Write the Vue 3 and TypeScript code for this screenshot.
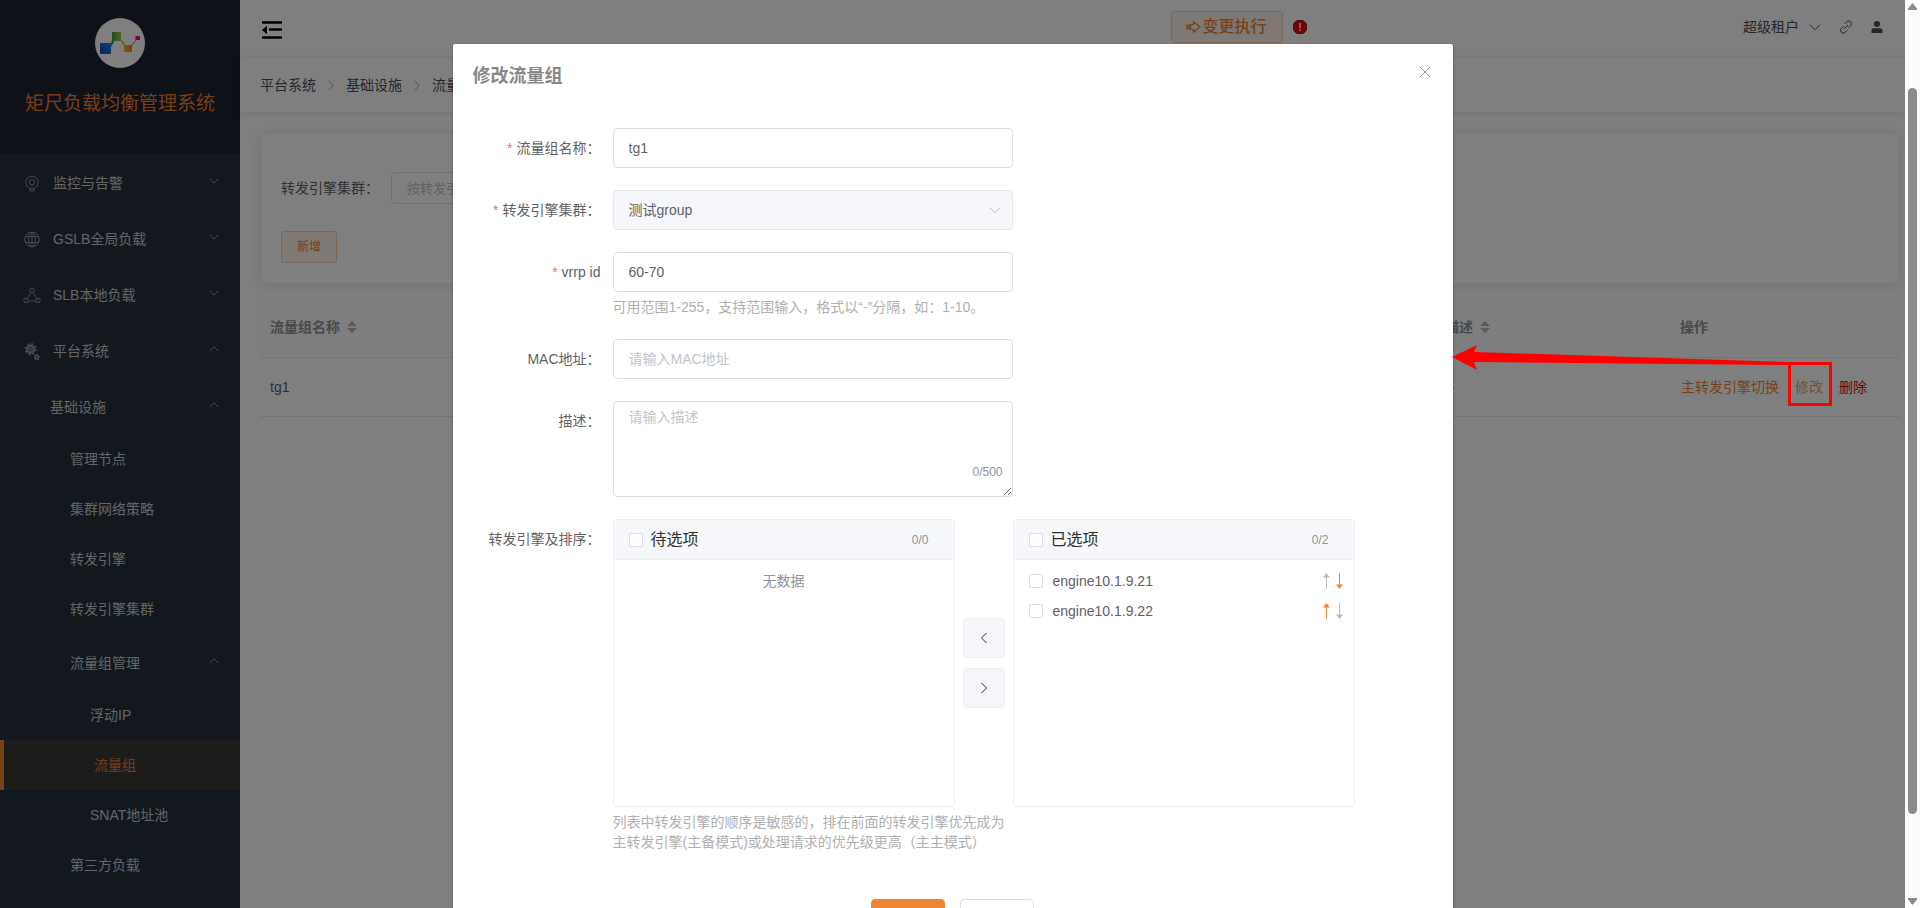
<script setup lang="ts">
import { ref } from 'vue'

interface MenuItem {
  label: string
  level: number
  icon?: string
  arrow?: 'up' | 'down'
  active?: boolean
}

const menu: MenuItem[] = [
  { label: '监控与告警', level: 0, icon: 'camera', arrow: 'down' },
  { label: 'GSLB全局负载', level: 0, icon: 'globe', arrow: 'down' },
  { label: 'SLB本地负载', level: 0, icon: 'nodes', arrow: 'down' },
  { label: '平台系统', level: 0, icon: 'gears', arrow: 'up' },
  { label: '基础设施', level: 1, arrow: 'up' },
  { label: '管理节点', level: 2 },
  { label: '集群网络策略', level: 2 },
  { label: '转发引擎', level: 2 },
  { label: '转发引擎集群', level: 2 },
  { label: '流量组管理', level: 2, arrow: 'up' },
  { label: '浮动IP', level: 3 },
  { label: '流量组', level: 3, active: true },
  { label: 'SNAT地址池', level: 3 },
  { label: '第三方负载', level: 2 },
]

const crumbs = ['平台系统', '基础设施', '流量组']
const engines = ['engine10.1.9.21', 'engine10.1.9.22']

const name = ref('tg1')
const vrrp = ref('60-70')
const mac = ref('')
const desc = ref('')
const cluster = ref('测试group')
</script>

<template>
  <div class="window">
    <div class="viewport">
      <div class="app">
        <aside class="sidebar">
          <div class="brand">
            <svg class="logo" viewBox="0 0 50 50" aria-hidden="true">
              <defs>
                <linearGradient id="lg-blue" x1="0" y1="1" x2="1" y2="0">
                  <stop offset="0" stop-color="#0a3fc0" /><stop offset="1" stop-color="#0e8fe0" />
                </linearGradient>
                <linearGradient id="lg-green" x1="0" y1="0" x2="1" y2="0">
                  <stop offset="0" stop-color="#2c9a3c" /><stop offset="1" stop-color="#b4c83c" />
                </linearGradient>
                <linearGradient id="lg-orange" x1="0" y1="0" x2="1" y2="0">
                  <stop offset="0" stop-color="#f0c020" /><stop offset="1" stop-color="#f07a18" />
                </linearGradient>
              </defs>
              <circle cx="25" cy="25" r="25" fill="#fff" />
              <path d="M14 27 L19 21 L19 24 L16 29 Z" fill="#1496b4" />
              <path d="M26 22 L31 29" stroke="#c8c83c" stroke-width="2" />
              <path d="M36 28 L42 21" stroke="#e8442c" stroke-width="1" />
              <rect x="5" y="25" width="11" height="11" rx="1" fill="url(#lg-blue)" />
              <rect x="17" y="14" width="9" height="9" rx="1" fill="url(#lg-green)" />
              <rect x="29" y="27" width="8" height="7" rx="1" fill="url(#lg-orange)" />
              <rect x="40.500" y="18" width="4.500" height="4" fill="#d8107c" />
            </svg>
            <h1>矩尺负载均衡管理系统</h1>
          </div>
          <nav>
            <a
              v-for="item in menu"
              :key="item.label"
              href="#"
              :class="['item', 'level-' + item.level, { sub: item.arrow, active: item.active }]"
            >
              <svg v-if="item.icon === 'camera'" class="icon" viewBox="0 0 16 16">
                <circle cx="8" cy="7" r="6.300" /><circle cx="8" cy="7" r="2.700" />
                <path d="M6.500 13l-1 2.400h5L9.500 13" />
              </svg>
              <svg v-else-if="item.icon === 'globe'" class="icon" viewBox="0 0 16 16">
                <circle cx="8" cy="8" r="7.300" /><ellipse cx="8" cy="8" rx="3.400" ry="7.300" />
                <path d="M8 .7v14.600M1.500 5h13M1.500 11h13" />
              </svg>
              <svg v-else-if="item.icon === 'nodes'" class="icon wide" viewBox="0 0 18 16">
                <circle cx="9" cy="2.700" r="2.200" /><circle cx="3" cy="13" r="2.200" /><circle cx="15" cy="13" r="2.200" />
                <path d="M8 4.800L4.200 11M10 4.800L13.800 11M5.300 13.500h7.400" />
              </svg>
              <svg v-else-if="item.icon === 'gears'" class="icon" viewBox="0 0 16 18">
                <circle cx="6.500" cy="6.500" r="3.500" stroke-width="2.600" />
                <circle cx="6.500" cy="6.500" r="5.500" stroke-width="2" stroke-dasharray="2.160 2.160" />
                <circle cx="6.500" cy="6.500" r="1" fill="currentColor" />
                <circle cx="13" cy="15" r="1.900" stroke-width="1.600" />
                <circle cx="13" cy="15" r="2.700" stroke-dasharray="1.060 1.060" />
              </svg>
              <span>{{ item.label }}</span>
              <svg v-if="item.arrow" :class="['caret', item.arrow]" viewBox="0 0 10 6"><path d="M.5 .7L5 5.200L9.500 .7" /></svg>
            </a>
          </nav>
        </aside>

        <main>
          <header class="topbar">
            <button class="collapse" aria-label="收起菜单">
              <svg viewBox="0 0 20 18"><path d="M0 1.500h20M7 8.500h13M0 16.500h20" stroke="#000" stroke-width="2.600" /><path d="M0 9l5-4.300v8.600z" /></svg>
            </button>
            <div class="change">
              <button class="apply">
                <svg viewBox="0 0 15 14"><path d="M1 4.500v5M3 4.500v5" stroke-width="1.500" /><path d="M4.500 4.500h3V1.800L14 7l-6.500 5.200V9.500h-3z" stroke-width="1.200" /></svg>
                变更执行
              </button>
              <svg class="alert" viewBox="0 0 14 14"><circle cx="7" cy="7" r="7" fill="#f00" /><path d="M7 3v5M7 9.500v1.500" stroke="#fff" stroke-width="1.600" /></svg>
            </div>
            <div class="user">
              <span>超级租户</span>
              <svg class="tenant-caret" viewBox="0 0 12 7"><path d="M1 .7L6 5.700L11 .7" /></svg>
              <svg class="link" viewBox="0 0 14 14"><path d="M5.600 3.900L7.800 1.700a2.600 2.600 0 0 1 4 .3a2.700 2.700 0 0 1 0 3.500L9.500 7.900M8.400 10.100L6.200 12.300a2.600 2.600 0 0 1-4-.3a2.700 2.700 0 0 1 0-3.500L4.500 6.100M5 9l4-4" /></svg>
              <svg class="person" viewBox="0 0 12 12"><circle cx="6" cy="3" r="3" /><path d="M.5 12V9.500q0-2.200 2.200-2.200h6.600q2.200 0 2.200 2.200V12z" /></svg>
            </div>
          </header>
          <nav class="crumbs">
            <template v-for="(crumb, i) in crumbs" :key="crumb">
              <svg v-if="i" viewBox="0 0 6 11"><path d="M.7 .7L5.200 5.500L.7 10.300" /></svg>
              <a href="#">{{ crumb }}</a>
            </template>
          </nav>

          <section class="search">
            <div class="field">
              <label for="search-cluster">转发引擎集群：</label>
              <input id="search-cluster" type="text" placeholder="按转发引擎集群查询" />
            </div>
            <button class="add">新增</button>
          </section>

          <table>
            <thead>
              <tr>
                <th>流量组名称 <svg class="sort" viewBox="0 0 10 12"><path d="M0 5L5 0L10 5zM0 7L5 12L10 7z" /></svg></th>
                <th colspan="4"></th>
                <th>描述 <svg class="sort" viewBox="0 0 10 12"><path d="M0 5L5 0L10 5zM0 7L5 12L10 7z" /></svg></th>
                <th class="ops-head">操作</th>
              </tr>
            </thead>
            <tbody>
              <tr>
                <td>tg1</td>
                <td colspan="4"></td>
                <td>--</td>
                <td>
                  <div class="ops">
                    <a href="#">主转发引擎切换</a>
                    <a href="#" class="edit">修改</a>
                    <a href="#" class="remove">删除</a>
                  </div>
                </td>
              </tr>
            </tbody>
          </table>
        </main>
      </div>

      <div class="overlay">
        <form class="dialog" role="dialog" aria-labelledby="dialog-title" @submit.prevent>
          <header>
            <h2 id="dialog-title">修改流量组</h2>
            <button type="button" class="close" aria-label="关闭">
              <svg viewBox="0 0 12 12"><path d="M1 1l10 10M11 1L1 11" /></svg>
            </button>
          </header>

          <div class="row">
            <label class="required" for="f-name">流量组名称：</label>
            <input id="f-name" v-model="name" class="control" type="text" />
          </div>
          <div class="row">
            <label class="required" for="f-cluster">转发引擎集群：</label>
            <div class="select">
              <select id="f-cluster" v-model="cluster" class="control" disabled>
                <option>测试group</option>
              </select>
              <svg viewBox="0 0 12 7"><path d="M1 .7L6 5.700L11 .7" /></svg>
            </div>
          </div>
          <div class="row">
            <label class="required" for="f-vrrp">vrrp id</label>
            <div class="body">
              <input id="f-vrrp" v-model="vrrp" class="control" type="text" />
              <p class="hint">可用范围1-255，支持范围输入，格式以“-”分隔，如：1-10。</p>
            </div>
          </div>
          <div class="row">
            <label for="f-mac">MAC地址：</label>
            <input id="f-mac" v-model="mac" class="control" type="text" placeholder="请输入MAC地址" />
          </div>
          <div class="row">
            <label for="f-desc">描述：</label>
            <div class="area">
              <textarea id="f-desc" v-model="desc" class="control" maxlength="500" placeholder="请输入描述"></textarea>
              <span class="count">{{ desc.length }}/500</span>
            </div>
          </div>
          <div class="row">
            <span class="label">转发引擎及排序：</span>
            <div class="body">
              <div class="transfer">
                <section class="panel">
                  <div class="panel-head">
                    <label><input type="checkbox" /> 待选项</label>
                    <span>0/0</span>
                  </div>
                  <p class="empty">无数据</p>
                </section>
                <div class="moves">
                  <button type="button" aria-label="移到左侧"><svg viewBox="0 0 8 12"><path d="M6.500 1L1.500 6l5 5" /></svg></button>
                  <button type="button" aria-label="移到右侧"><svg viewBox="0 0 8 12"><path d="M1.500 1l5 5l-5 5" /></svg></button>
                </div>
                <section class="panel">
                  <div class="panel-head">
                    <label><input type="checkbox" /> 已选项</label>
                    <span>0/2</span>
                  </div>
                  <ul>
                    <li v-for="(engine, i) in engines" :key="engine">
                      <label><input type="checkbox" /> {{ engine }}</label>
                      <button type="button" class="order" :disabled="i === 0" aria-label="上移">
                        <svg viewBox="0 0 7 16"><path d="M3.500 2v14" /><path class="head" d="M0 4.500L3.500 0L7 4.500z" /></svg>
                      </button>
                      <button type="button" class="order" :disabled="i === engines.length - 1" aria-label="下移">
                        <svg viewBox="0 0 7 16"><path d="M3.500 0v14" /><path class="head" d="M0 11.500L3.500 16L7 11.500z" /></svg>
                      </button>
                    </li>
                  </ul>
                </section>
              </div>
              <p class="hint">列表中转发引擎的顺序是敏感的，排在前面的转发引擎优先成为主转发引擎(主备模式)或处理请求的优先级更高（主主模式）</p>
            </div>
          </div>
          <footer>
            <button type="submit" class="primary">确定</button>
            <button type="button" class="plain">取消</button>
          </footer>
        </form>
      </div>

      <svg class="annotation" viewBox="0 0 380 62" aria-hidden="true">
        <path d="M0 12L25 0L22 7L336 17V20L22 17L25 25Z" fill="#f00" />
        <rect x="337.500" y="18.500" width="41" height="41" fill="none" stroke="#f00" stroke-width="3" />
      </svg>
    </div>

    <div class="scrollbar" aria-hidden="true">
      <svg viewBox="0 0 9 7"><path d="M4.500 0L9 5.500V7H0V5.500Z" /></svg>
      <div class="track"><div class="thumb"></div></div>
      <svg viewBox="0 0 9 7"><path d="M4.500 7L9 1.500V0H0V1.500Z" /></svg>
    </div>
  </div>
</template>

<style>
body {
  overflow: hidden;
}
</style>

<style scoped>
* {
  box-sizing: border-box;
}

.window {
  display: grid;
  grid-template-columns: minmax(0, 1fr) 15px;
  height: 100vh;
  font: 14px/20px "Liberation Sans", "Noto Sans CJK SC", sans-serif;
  color: #606266;
}

button,
input,
select,
textarea {
  font: inherit;
  color: inherit;
}

button {
  padding: 0;
  border: 0;
  background: none;
}

a {
  color: inherit;
  text-decoration: none;
}

h1,
h2,
p,
ul {
  margin: 0;
  padding: 0;
}

svg {
  flex: none;
  fill: none;
  stroke: currentColor;
}

.viewport {
  position: relative;
  overflow: hidden;
}

.app {
  display: grid;
  grid-template-columns: 240px minmax(0, 1fr);
  min-height: 100%;
}

.sidebar {
  background: #26303c;
  color: #c8cacc;
}

.brand {
  display: flex;
  flex-direction: column;
  align-items: center;
  gap: 21px;
  height: 154px;
  padding-top: 18px;
  background: #1c222e;
}

.logo {
  width: 50px;
  height: 50px;
  stroke: none;
}

h1 {
  font-size: 19px;
  font-weight: 400;
  line-height: 30px;
  color: #ee7e33;
  white-space: nowrap;
}

.item {
  display: flex;
  align-items: center;
  height: 50px;
  padding-right: 20px;
}

.item.sub {
  height: 56px;
  padding-top: 2px;
}

.level-0 {
  padding-left: 24px;
}

.level-1 {
  padding-left: 50px;
}

.level-2 {
  padding-left: 70px;
}

.level-3 {
  padding-left: 90px;
}

.item.active {
  border-left: 4px solid #ef8432;
  background: #383835;
  color: #ef7632;
}

.icon {
  width: 16px;
  height: 17px;
  margin-right: 13px;
  color: #909499;
}

.icon.wide {
  width: 18px;
  margin: 0 12px 0 -1px;
}

.caret {
  width: 10px;
  height: 6px;
  margin: 0 1px 4px auto;
  color: #909499;
}

.caret.up {
  transform: rotate(180deg);
}

.topbar {
  display: flex;
  align-items: center;
  justify-content: space-between;
  height: 58px;
  padding: 0 22px 3px;
  border-bottom: 1px solid #f0f1f3;
  color: #333;
}

main {
  background: #fff;
}

.collapse {
  width: 20px;
  height: 18px;
  margin-top: 5px;
  line-height: 0;
}

.collapse svg {
  width: 20px;
  height: 18px;
  fill: #000;
  stroke: none;
}

.change {
  display: flex;
  align-items: center;
  gap: 10px;
  margin-left: 452px;
}

.apply {
  display: flex;
  align-items: center;
  justify-content: center;
  gap: 1px;
  width: 112px;
  height: 32px;
  border: 1px solid #f9cead;
  border-radius: 3px;
  background: #fdf3eb;
  color: #ef8432;
  font-size: 16px;
  font-weight: 500;
}

.apply svg {
  width: 15px;
  height: 14px;
}

.alert {
  width: 14px;
  height: 14px;
}

.user {
  display: flex;
  align-items: center;
  color: #4a4d52;
}

.tenant-caret {
  width: 12px;
  height: 7px;
  margin: 0 18px 0 10px;
}

.link {
  width: 14px;
  height: 14px;
  margin-right: 18px;
}

.person {
  width: 12px;
  height: 12px;
  fill: currentColor;
  stroke: none;
}

.crumbs {
  display: flex;
  align-items: center;
  gap: 12px;
  height: 54px;
  padding: 0 20px;
  color: #4c4f55;
  box-shadow: 0 2px 8px rgba(0, 0, 0, 0.1);
}

.crumbs svg {
  width: 6px;
  height: 11px;
  color: #a8abb2;
}

.search {
  display: flex;
  flex-direction: column;
  align-items: flex-start;
  gap: 27px;
  margin: 20px 5px 15px 20px;
  padding: 39px 20px 20px;
  border: 1px solid #ebeef5;
  border-radius: 4px;
  box-shadow: 0 2px 12px rgba(0, 0, 0, 0.1);
}

.field {
  display: flex;
  align-items: center;
  gap: 12px;
}

.field input {
  width: 200px;
  height: 32px;
  padding: 0 15px;
  border: 1px solid #dcdfe6;
  border-radius: 4px;
  font-size: 13px;
}

::placeholder {
  color: #c0c4cc;
  opacity: 1;
}

.add {
  width: 56px;
  height: 32px;
  border: 1px solid #f9cead;
  border-radius: 3px;
  background: #fdf3eb;
  color: #ef8432;
  font-size: 12px;
}

table {
  width: calc(100% - 25px);
  margin-left: 20px;
  border-collapse: collapse;
  table-layout: fixed;
}

th,
td {
  padding: 0 10px;
  border-bottom: 1px solid #e6e9f0;
  text-align: left;
}

th {
  height: 58px;
  padding-bottom: 2px;
  background: #fcfcfc;
  color: #909399;
}

th:last-child {
  width: 230px;
}

td {
  height: 59px;
}

.sort {
  width: 10px;
  height: 12px;
  margin-left: 3px;
  vertical-align: -1px;
  fill: #b4b7bd;
  stroke: none;
}

.ops {
  display: flex;
  gap: 16px;
  padding-left: 1px;
  white-space: nowrap;
  color: #ef8432;
}

.edit {
  color: #e2a573;
}

.remove {
  color: #e60012;
}

.overlay {
  position: absolute;
  inset: 0;
  display: flex;
  justify-content: center;
  align-items: flex-start;
  padding-top: 44px;
  background: rgba(0, 0, 0, 0.5);
  overflow: hidden;
}

.dialog {
  display: flex;
  flex-direction: column;
  gap: 22px;
  width: 1000px;
  max-width: 100%;
  padding: 20px 20px 30px;
  border-radius: 2px;
  background: #fff;
  box-shadow: 0 1px 3px rgba(0, 0, 0, 0.3);
}

.dialog > header {
  display: flex;
  justify-content: space-between;
  height: 42px;
}

h2 {
  font-size: 18px;
  line-height: 24px;
  color: #888;
}

.close {
  width: 16px;
  height: 16px;
  color: #909399;
  line-height: 0;
}

.close svg {
  width: 12px;
  height: 12px;
}

.row {
  display: grid;
  grid-template-columns: 128px minmax(0, 1fr);
  column-gap: 12px;
}

.row > label,
.label {
  line-height: 40px;
  text-align: right;
}

.required::before {
  content: "*";
  margin-right: 4px;
  color: #f56c6c;
}

.control {
  display: block;
  width: 100%;
  max-width: 400px;
  height: 40px;
  padding: 0 15px;
  border: 1px solid #dcdfe6;
  border-radius: 4px;
  background: #fff;
  outline: none;
}

.select,
.area {
  position: relative;
  max-width: 400px;
}

select.control {
  appearance: none;
  border-color: #e4e7ed;
  background: #f5f7fa;
  color: #606266;
  opacity: 1;
}

.select svg {
  position: absolute;
  top: 17px;
  right: 12px;
  width: 12px;
  height: 7px;
  color: #b4b8c0;
}

textarea.control {
  height: 96px;
  padding: 5px 15px;
  line-height: 21px;
  resize: vertical;
}

.count {
  position: absolute;
  right: 10px;
  bottom: 16px;
  font-size: 12px;
  line-height: 18px;
  color: #909399;
}

.hint {
  max-width: 400px;
  padding-top: 5px;
  color: #b0b0b0;
}

.transfer {
  display: flex;
}

.panel {
  width: 342px;
  height: 288px;
  border: 1px solid #ebeef5;
  border-radius: 4px;
  overflow: hidden;
}

.panel-head {
  display: flex;
  align-items: center;
  justify-content: space-between;
  height: 40px;
  padding: 0 25px 0 15px;
  border-bottom: 1px solid #ebeef5;
  background: #f5f7fa;
  font-size: 12px;
  color: #909399;
}

.panel label {
  display: flex;
  align-items: center;
  gap: 10px;
}

.panel-head label {
  gap: 8px;
  font-size: 16px;
  color: #303133;
}

input[type="checkbox"] {
  appearance: none;
  width: 14px;
  height: 14px;
  margin: 0;
  border: 1px solid #dcdfe6;
  border-radius: 2px;
  background: #fff;
}

.empty {
  padding-top: 6px;
  line-height: 30px;
  text-align: center;
  color: #909399;
}

.panel ul {
  padding: 6px 11px 0 15px;
  list-style: none;
}

.panel li {
  display: flex;
  align-items: center;
  gap: 6px;
  height: 30px;
}

.panel li label {
  flex: 1;
}

.order {
  width: 7px;
  height: 16px;
  line-height: 0;
  color: #ef8432;
}

.order:disabled {
  color: #bbb;
}

.order svg {
  width: 7px;
  height: 16px;
}

.order .head {
  fill: currentColor;
  stroke: none;
}

.moves {
  display: flex;
  flex-direction: column;
  justify-content: center;
  gap: 10px;
  padding: 0 8px;
}

.moves button {
  width: 42px;
  height: 40px;
  border: 1px solid #ebeef5;
  border-radius: 4px;
  background: #f5f7fa;
  color: #303133;
  line-height: 0;
}

.moves svg {
  width: 8px;
  height: 12px;
}

.dialog footer {
  display: flex;
  justify-content: center;
  gap: 15px;
  padding-top: 25px;
}

.dialog footer button {
  width: 74px;
  height: 40px;
  border: 1px solid #dcdfe6;
  border-radius: 4px;
}

.dialog footer .primary {
  border-color: #ef8432;
  background: #ef8432;
  color: #fff;
}

.annotation {
  position: absolute;
  top: 345px;
  right: 73px;
  width: 380px;
  height: 62px;
  stroke: none;
}

.scrollbar {
  display: flex;
  flex-direction: column;
  align-items: center;
  gap: 12px;
  padding: 3px 0;
  background: #fcfcfc;
}

.scrollbar svg {
  width: 9px;
  height: 7px;
  fill: #8b8b8b;
  stroke: none;
}

.track {
  flex: 1;
  width: 9px;
  padding-top: 66px;
}

.thumb {
  height: 91%;
  border-radius: 5px;
  background: #8b8b8b;
}
</style>
